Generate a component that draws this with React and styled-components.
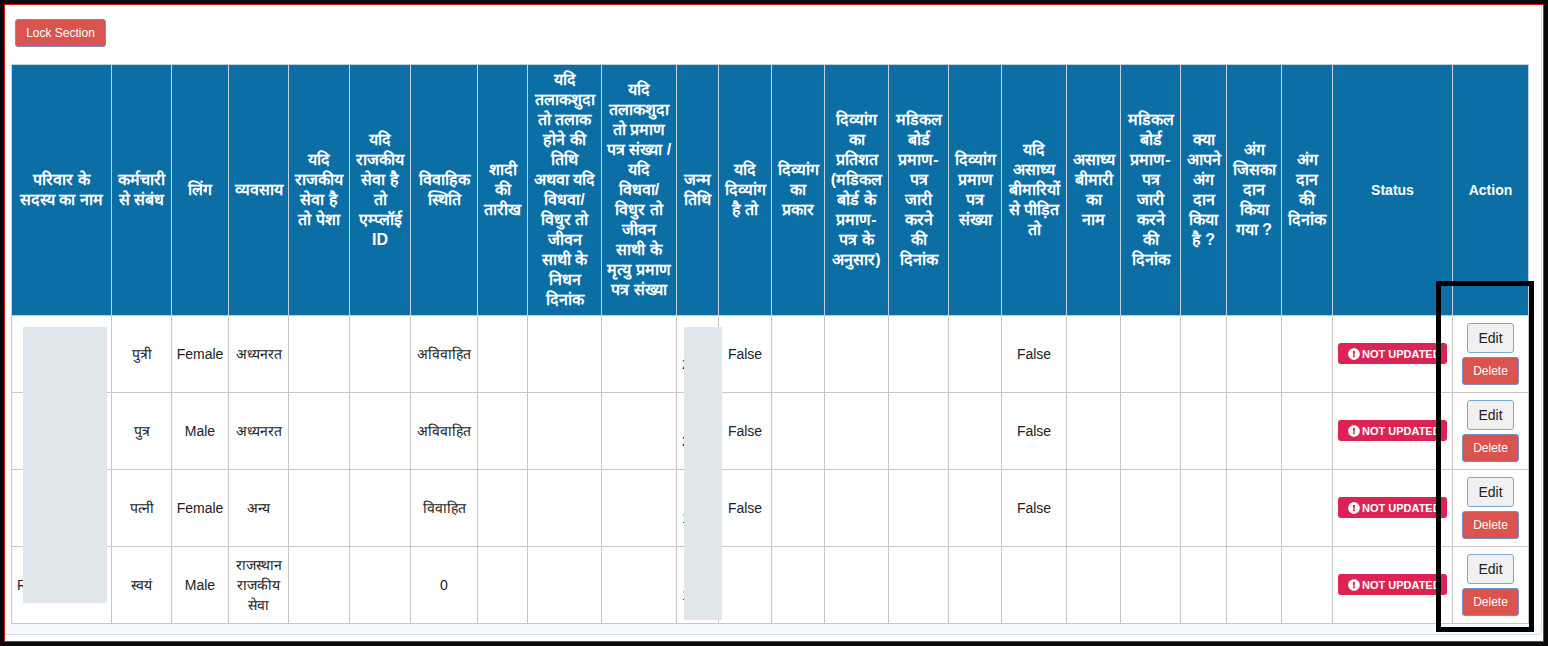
import React from "react";
import styled, { createGlobalStyle } from "styled-components";
import { FaExclamationCircle } from "react-icons/fa";

const columns = [100, 60, 57, 60, 61, 61, 67, 50, 74, 75, 42, 53, 53, 64, 60, 53, 65, 54, 60, 46, 55, 51, 120, 76];

const headings = [
  "परिवार के\nसदस्य का नाम",
  "कर्मचारी\nसे संबंध",
  "लिंग",
  "व्यवसाय",
  "यदि\nराजकीय\nसेवा है\nतो पेशा",
  "यदि\nराजकीय\nसेवा है\nतो\nएम्प्लॉई\nID",
  "विवाहिक\nस्थिति",
  "शादी\nकी\nतारीख",
  "यदि\nतलाकशुदा\nतो तलाक\nहोने की\nतिथि\nअथवा यदि\nविधवा/\nविधुर तो\nजीवन\nसाथी के\nनिधन\nदिनांक",
  "यदि\nतलाकशुदा\nतो प्रमाण\nपत्र संख्या /\nयदि\nविधवा/\nविधुर तो\nजीवन\nसाथी के\nमृत्यु प्रमाण\nपत्र संख्या",
  "जन्म\nतिथि",
  "यदि\nदिव्यांग\nहै तो",
  "दिव्यांग\nका\nप्रकार",
  "दिव्यांग\nका\nप्रतिशत\n(मडिकल\nबोर्ड के\nप्रमाण-\nपत्र के\nअनुसार)",
  "मडिकल\nबोर्ड\nप्रमाण-\nपत्र\nजारी\nकरने\nकी\nदिनांक",
  "दिव्यांग\nप्रमाण\nपत्र\nसंख्या",
  "यदि\nअसाध्य\nबीमारियों\nसे पीड़ित\nतो",
  "असाध्य\nबीमारी\nका\nनाम",
  "मडिकल\nबोर्ड\nप्रमाण-\nपत्र\nजारी\nकरने\nकी\nदिनांक",
  "क्या\nआपने\nअंग\nदान\nकिया\nहै ?",
  "अंग\nजिसका\nदान\nकिया\nगया ?",
  "अंग\nदान\nकी\nदिनांक",
];

const members = [
  { relation: "पुत्री", gender: "Female", job: "अध्यनरत", marital: "अविवाहित", born: "2005", disabled: "False", illness: "False" },
  { relation: "पुत्र", gender: "Male", job: "अध्यनरत", marital: "अविवाहित", born: "2008", disabled: "False", illness: "False" },
  { relation: "पत्नी", gender: "Female", job: "अन्य", marital: "विवाहित", born: "1985", disabled: "False", illness: "False" },
  { relation: "स्वयं", gender: "Male", job: "राजस्थान\nराजकीय\nसेवा", marital: "0", born: "1980", name: "R", disabled: "", illness: "" },
];

export default function App() {
  return (
    <>
      <GlobalStyle />
      <Frame>
        <Panel>
          <LockButton>Lock Section</LockButton>
          <Table>
            <colgroup>
              {columns.map((width, i) => (
                <col key={i} style={{ width }} />
              ))}
            </colgroup>
            <thead>
              <tr>
                {headings.map((text, i) => (
                  <HeadCell key={i}>{text}</HeadCell>
                ))}
                <LatinHead>Status</LatinHead>
                <LatinHead>Action</LatinHead>
              </tr>
            </thead>
            <tbody>
              {members.map((m) => (
                <tr key={m.relation}>
                  <NameCell>{m.name}</NameCell>
                  <Cell>{m.relation}</Cell>
                  <Cell>{m.gender}</Cell>
                  <Cell>{m.job}</Cell>
                  <Cell />
                  <Cell />
                  <Cell>{m.marital}</Cell>
                  <Cell />
                  <Cell />
                  <Cell />
                  <Cell>{"\u00a0\n" + m.born}</Cell>
                  <Cell>{m.disabled}</Cell>
                  <Cell />
                  <Cell />
                  <Cell />
                  <Cell />
                  <Cell>{m.illness}</Cell>
                  <Cell />
                  <Cell />
                  <Cell />
                  <Cell />
                  <Cell />
                  <Cell>
                    <Badge>
                      <FaExclamationCircle size={12} />
                      NOT UPDATED
                    </Badge>
                  </Cell>
                  <Cell>
                    <Actions>
                      <EditButton>Edit</EditButton>
                      <DeleteButton>Delete</DeleteButton>
                    </Actions>
                  </Cell>
                </tr>
              ))}
            </tbody>
          </Table>
          <PanelFoot />
        </Panel>
        <NameMask />
        <DateMask />
        <Highlight />
      </Frame>
    </>
  );
}

const GlobalStyle = createGlobalStyle`
  html, body {
    margin: 0;
    padding: 0;
    background: #000;
  }
`;

const Frame = styled.div`
  position: relative;
  box-sizing: border-box;
  width: 1548px;
  height: 646px;
  padding: 1px;
  background: #fff;
  border: 4px solid #0a0a0a;
  outline: 1px solid #e2141c;
  outline-offset: -5px;
  font-family: "Liberation Sans", Arial, sans-serif;
  color: #222;
  overflow: hidden;
`;

const Panel = styled.div`
  display: flex;
  flex-direction: column;
  box-sizing: border-box;
  width: 1537px;
  height: 630px;
  padding: 14px 0 0 6px;
  background: #fff;
  border-right: 1px solid #d3e3ec;
  border-bottom: 1px solid #d3e3ec;
  border-bottom-right-radius: 3px;
`;

const PanelFoot = styled.div`
  flex: 1;
  margin-left: -6px;
  background: #f7fbfd;
`;

const LockButton = styled.button`
  display: block;
  flex: none;
  box-sizing: border-box;
  width: 91px;
  height: 28px;
  margin: 0 0 17px 4px;
  padding: 0;
  background: #d9534f;
  border: 1px solid #7a8fc0;
  border-radius: 3px;
  color: #fff;
  font: 12px "Liberation Sans", Arial, sans-serif;
`;

const Table = styled.table`
  flex: none;
  table-layout: fixed;
  width: 1517px;
  border-collapse: collapse;
  font-size: 14px;
`;

const HeadCell = styled.th`
  height: 250px;
  padding: 0;
  background: #0b6ea5;
  border: 1px solid #c5d3dd;
  border-bottom: none;
  color: #fff;
  font-size: 16px;
  font-weight: 700;
  line-height: 20px;
  text-align: center;
  vertical-align: middle;
  white-space: pre-line;
`;

const LatinHead = styled(HeadCell)`
  font-size: 14px;
`;

const Cell = styled.td`
  height: 76px;
  padding: 0 3px;
  border: 1px solid #c8c8c8;
  font-size: 14px;
  line-height: 20px;
  text-align: center;
  vertical-align: middle;
  white-space: pre-line;
`;

const NameCell = styled(Cell)`
  padding-left: 5px;
  text-align: left;
`;

const Badge = styled.span`
  display: inline-flex;
  align-items: center;
  justify-content: flex-start;
  gap: 2px;
  box-sizing: border-box;
  width: 109px;
  height: 21px;
  padding-left: 10px;
  background: #dc2454;
  border-radius: 3px;
  color: #fff;
  font-size: 11px;
  font-weight: 700;
  white-space: nowrap;
`;

const Actions = styled.div`
  display: flex;
  flex-direction: column;
  align-items: center;
  gap: 4px;
`;

const EditButton = styled.button`
  box-sizing: border-box;
  width: 47px;
  height: 30px;
  padding: 0;
  background: #f0f0f0;
  border: 1px solid #7ba6cf;
  border-radius: 3px;
  color: #222;
  font: 14px "Liberation Sans", Arial, sans-serif;
`;

const DeleteButton = styled.button`
  box-sizing: border-box;
  width: 57px;
  height: 28px;
  padding: 0;
  background: #d9534f;
  border: 1px solid #7a8fc0;
  border-radius: 3px;
  color: #fff;
  font: 12px "Liberation Sans", Arial, sans-serif;
`;

const Mask = styled.div`
  position: absolute;
  background: #dfe7ea;
`;

const NameMask = styled(Mask)`
  left: 19px;
  top: 323px;
  width: 84px;
  height: 276px;
`;

const DateMask = styled(Mask)`
  left: 680px;
  top: 323px;
  width: 38px;
  height: 293px;
`;

const Highlight = styled.div`
  position: absolute;
  left: 1432px;
  top: 277px;
  box-sizing: border-box;
  width: 98px;
  height: 351px;
  border: 5px solid #000;
`;
